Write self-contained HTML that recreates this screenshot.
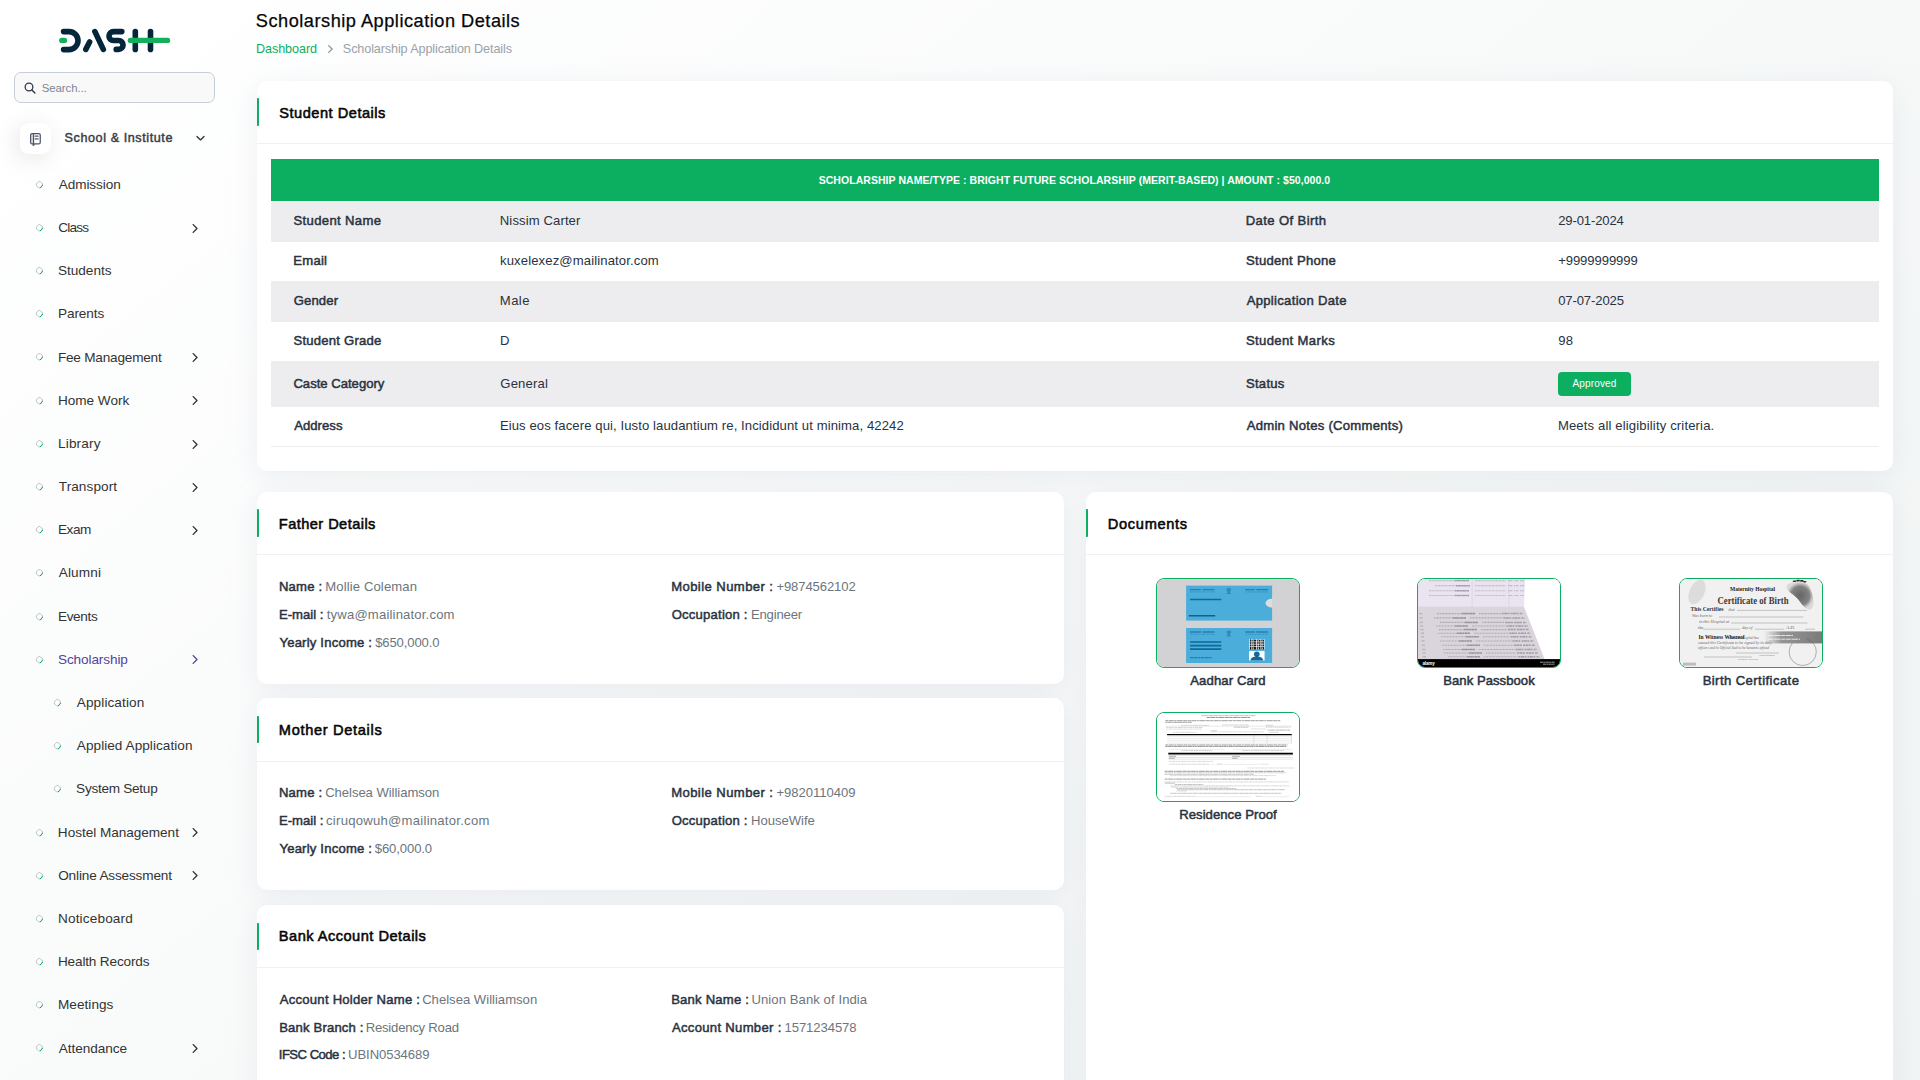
<!DOCTYPE html>
<html lang="en"><head>
<meta charset="utf-8">
<title>Scholarship Application Details</title>
<style>
*{box-sizing:border-box;margin:0;padding:0}
html,body{width:1920px;height:1080px;overflow:hidden}
body{font-family:"Liberation Sans",sans-serif;color:#293240;font-size:13px;
 background:linear-gradient(141.55deg,rgba(240,244,243,0) 3.46%,#f0f4f3 99.86%),#ffffff;position:relative}
.abs{position:absolute;white-space:nowrap}
/* ---------- sidebar ---------- */
#logo{position:absolute;left:56px;top:24px;width:118px;height:32px}
.search{position:absolute;left:14px;top:72px;width:201px;height:31px;border:1px solid #c8ced8;border-radius:7px;background:#f9f9fa}
.search svg{position:absolute;left:9px;top:9px;width:12px;height:12px}
.search span{position:absolute;left:27px;top:0;line-height:29px;font-size:11.4px;color:#7b8594}
.modicon{position:absolute;left:20px;top:123px;width:31px;height:31px;border-radius:9px;background:#fff;box-shadow:-3px 4px 23px rgba(0,0,0,.1)}
.modicon svg{position:absolute;left:9px;top:8.5px;width:13px;height:14px}
.modname{left:64.5px;top:127px;line-height:20px;font-size:12.6px;font-weight:normal;-webkit-text-stroke:.45px #3a3d42;color:#3a3d42}
.menu{position:absolute;left:0;top:162.8px;width:240px;list-style:none}
.menu li{position:relative;height:43.2px;line-height:43.2px;font-size:13.6px;color:#333;white-space:nowrap}
.menu li b{font-weight:normal;position:absolute;left:58.5px;top:0}
.menu li.sub b{left:76px}
.menu li i{position:absolute;left:36.1px;top:17.9px;width:7.4px;height:7.4px;border-radius:50%;border:1px solid #c4cad3;border-bottom-color:#0caf60;transform:rotate(-50deg);background:#fff}
.menu li.sub i{left:54.1px}
.menu li svg{position:absolute;left:190.5px;top:16.6px;width:8px;height:11px}
.menu li.act{color:#51459d}
/* ---------- main ---------- */
.h4{left:256.5px;top:9px;line-height:24px;font-size:18.2px;color:#060606;-webkit-text-stroke:.25px #060606}
.bc{top:39px;line-height:18px;font-size:12.6px}
.card{position:absolute;background:#fff;border-radius:10px;box-shadow:0 5px 27px rgba(182,186,203,.22)}
.card .bar{position:absolute;left:0;width:2px;height:27.5px;background:#0caf60;border-radius:0 1px 1px 0}
.card .hr{position:absolute;left:0;right:0;height:1px;background:#f1f1f1}
.ct{font-size:14.6px;-webkit-text-stroke:.55px #060606;color:#060606;line-height:20px}

.tbl{position:absolute;left:271px;top:159px;width:1608px;height:290px}
.th{height:42px;background:#0caf60;color:#fff;font-weight:bold;font-size:10.5px;text-align:center;line-height:43.8px;white-space:nowrap;padding-right:1.2px}
.tr{position:absolute;left:0;width:100%;height:40px;line-height:40.2px;font-size:13.1px;color:#293240;white-space:nowrap}
.tr.g{background:#ededef}

.tr span{position:absolute;top:0}
.tr .l1{left:22.5px;-webkit-text-stroke:.48px #293240}
.tr .v1{left:229.5px}
.tr .l2{left:975px;-webkit-text-stroke:.48px #293240}
.tr .v2{left:1287px}
.tr.last{line-height:38px}
.tline{position:absolute;left:0;width:100%;top:287.1px;height:1px;background:#ededee}
.badge{position:absolute;left:1287px;top:11px;height:24px;width:73px;border-radius:4px;background:#0caf60;color:#fff;font-size:10px;line-height:24px;text-align:center}
.kv{font-size:13.1px;line-height:20px;color:#6c757d}
.kl{color:#293240;-webkit-text-stroke:.48px #293240}
.doc{position:absolute;width:144px;height:90px;border:1px solid #0caf60;border-radius:8px;overflow:hidden;background:#fff}
.doc svg{position:absolute;left:0;top:0;width:142px;height:88px}
.dl{position:absolute;width:200px;text-align:center;font-weight:normal;-webkit-text-stroke:.5px #293240;font-size:13.1px;line-height:18px;color:#293240;white-space:nowrap}
</style>
</head>
<body>
<!-- SIDEBAR -->
<svg id="logo" viewBox="56 24 118 32" role="img" aria-label="DASH"><title>DASH</title>
<g fill="none" stroke="#04263a" stroke-width="5.6" stroke-linecap="round" stroke-linejoin="round">
<path d="M63.6 31.6H69a9 9 0 0 1 0 18H63.6"></path>
<path d="M85.8 49.4L89.6 42"></path>
<path d="M94.9 31.6L103.3 49.4"></path>
<path d="M121.8 31.6H113.4a4.45 4.45 0 0 0 0 8.9H118.6a4.45 4.45 0 0 1 0 8.9H116.2"></path>
<path d="M135.3 31.6V49.4"></path>
<path d="M150.5 31.6V49.4"></path>
</g>
<g fill="none" stroke="#12b05c" stroke-width="5.4" stroke-linecap="round">
<path d="M61.8 40.4H64.4"></path>
<path d="M130.4 40.4H167.5"></path>
</g>
</svg>
<div class="search"><svg viewBox="0 0 12 12"><circle cx="5" cy="5" r="3.85" fill="none" stroke="#2f3947" stroke-width="1.3"></circle><path d="M7.9 7.9L10.9 10.9" stroke="#2f3947" stroke-width="1.4" stroke-linecap="round"></path></svg><span style="letter-spacing: -0.068px; left: 26.72px; top: 0.58px;">Search...</span></div>
<div class="modicon"><svg viewBox="0 0 13 14"><rect x="2.3" y="2.2" width="1.6" height="9.1" fill="#dde0e5"/><g fill="none" stroke="#4b5567" stroke-width="1.25" stroke-linejoin="round" stroke-linecap="round"><rect x="1.65" y="1.55" width="9.6" height="10.4" rx="1.5"/><path d="M4.5 1.6V12"/><path d="M6.2 4.2H9.1M6.2 6.9H9.1"/></g><path d="M2.7 12.4H6.3L4.5 14.2z" fill="#4b5567"/></svg></div>
<div class="modicon" style="top:1093px"></div>
<div class="abs modname" style="letter-spacing: 0.575px; left: 64.61px; top: 127.59px;">School &amp; Institute</div>
<ul class="menu">
<li><i></i><b style="letter-spacing: -0.086px; left: 58.74px;">Admission</b></li>
<li><i></i><b style="letter-spacing: -0.791px; left: 58.18px;">Class</b><svg viewBox="0 0 8 11"><path d="M2.2 1.6L6 5.5L2.2 9.4" fill="none" stroke="#333" stroke-width="1.35" stroke-linecap="round" stroke-linejoin="round"></path></svg></li>
<li><i></i><b style="letter-spacing: 0.007px; left: 57.89px;">Students</b></li>
<li><i></i><b style="letter-spacing: -0.098px; left: 58px;">Parents</b></li>
<li><i></i><b style="letter-spacing: -0.205px; left: 57.88px;">Fee Management</b><svg viewBox="0 0 8 11"><path d="M2.2 1.6L6 5.5L2.2 9.4" fill="none" stroke="#333" stroke-width="1.35" stroke-linecap="round" stroke-linejoin="round"></path></svg></li>
<li><i></i><b style="letter-spacing: -0.036px; left: 58px;">Home Work</b><svg viewBox="0 0 8 11"><path d="M2.2 1.6L6 5.5L2.2 9.4" fill="none" stroke="#333" stroke-width="1.35" stroke-linecap="round" stroke-linejoin="round"></path></svg></li>
<li><i></i><b style="letter-spacing: 0.158px; left: 58px;">Library</b><svg viewBox="0 0 8 11"><path d="M2.2 1.6L6 5.5L2.2 9.4" fill="none" stroke="#333" stroke-width="1.35" stroke-linecap="round" stroke-linejoin="round"></path></svg></li>
<li><i></i><b style="letter-spacing: 0.079px; left: 58.75px;">Transport</b><svg viewBox="0 0 8 11"><path d="M2.2 1.6L6 5.5L2.2 9.4" fill="none" stroke="#333" stroke-width="1.35" stroke-linecap="round" stroke-linejoin="round"></path></svg></li>
<li><i></i><b style="letter-spacing: -0.469px; left: 58px;">Exam</b><svg viewBox="0 0 8 11"><path d="M2.2 1.6L6 5.5L2.2 9.4" fill="none" stroke="#333" stroke-width="1.35" stroke-linecap="round" stroke-linejoin="round"></path></svg></li>
<li><i></i><b style="letter-spacing: 0.153px; left: 58.73px;">Alumni</b></li>
<li><i></i><b style="letter-spacing: -0.315px; left: 57.88px;">Events</b></li>
<li class="act"><i></i><b style="letter-spacing: -0.113px; left: 57.98px;">Scholarship</b><svg viewBox="0 0 8 11"><path d="M2.2 1.6L6 5.5L2.2 9.4" fill="none" stroke="#51459d" stroke-width="1.35" stroke-linecap="round" stroke-linejoin="round"></path></svg></li>
<li class="sub"><i></i><b style="letter-spacing: 0.089px; left: 76.82px;">Application</b></li>
<li class="sub"><i></i><b style="letter-spacing: 0.044px; left: 76.82px;">Applied Application</b></li>
<li class="sub"><i></i><b style="letter-spacing: -0.275px; left: 76.1px;">System Setup</b></li>
<li><i></i><b style="letter-spacing: -0.037px; left: 57.87px;">Hostel Management</b><svg viewBox="0 0 8 11"><path d="M2.2 1.6L6 5.5L2.2 9.4" fill="none" stroke="#333" stroke-width="1.35" stroke-linecap="round" stroke-linejoin="round"></path></svg></li>
<li><i></i><b style="letter-spacing: -0.16px; left: 58.21px;">Online Assessment</b><svg viewBox="0 0 8 11"><path d="M2.2 1.6L6 5.5L2.2 9.4" fill="none" stroke="#333" stroke-width="1.35" stroke-linecap="round" stroke-linejoin="round"></path></svg></li>
<li><i></i><b style="letter-spacing: 0.156px; left: 57.96px;">Noticeboard</b></li>
<li><i></i><b style="letter-spacing: -0.169px; left: 57.96px;">Health Records</b></li>
<li><i></i><b style="letter-spacing: 0.04px; left: 57.96px;">Meetings</b></li>
<li><i></i><b style="letter-spacing: -0.065px; left: 58.86px;">Attendance</b><svg viewBox="0 0 8 11"><path d="M2.2 1.6L6 5.5L2.2 9.4" fill="none" stroke="#333" stroke-width="1.35" stroke-linecap="round" stroke-linejoin="round"></path></svg></li>
</ul>
<svg class="abs" style="left:195px;top:134px;width:11px;height:8px" viewBox="0 0 11 8"><path d="M2 2.4L5.5 5.9L9 2.4" fill="none" stroke="#333" stroke-width="1.35" stroke-linecap="round" stroke-linejoin="round"></path></svg>
<!-- MAIN -->
<div class="abs h4" style="letter-spacing: 0.504px; left: 255.87px; top: 9.33px;">Scholarship Application Details</div>
<div class="abs bc" style="left: 255.99px; color: rgb(12, 175, 96); letter-spacing: -0.067px; top: 40.3px;">Dashboard</div>
<svg class="abs" style="left:326px;top:43.6px;width:9px;height:10px" viewBox="0 0 9 10"><path d="M2.6 1.6L6.2 5L2.6 8.4" fill="none" stroke="#8a919b" stroke-width="1.2" stroke-linecap="round" stroke-linejoin="round"></path></svg>
<div class="abs bc" style="left: 342.85px; color: rgb(155, 161, 168); letter-spacing: -0.102px; top: 40.3px;">Scholarship Application Details</div>

<!-- Student details card -->
<div class="card" style="left:257px;top:80.8px;width:1636px;height:389.9px">
<div class="bar" style="top:17.5px"></div><div class="hr" style="top:62px"></div>
</div>
<div class="abs ct" style="left: 279.21px; top: 102.79px; letter-spacing: 0.516px;">Student Details</div>
<div class="tbl">
<div class="th" style="letter-spacing: 0.049px;">SCHOLARSHIP NAME/TYPE : BRIGHT FUTURE SCHOLARSHIP (MERIT-BASED) | AMOUNT : $50,000.0</div>
<div class="tr g" style="top:42px;height:40.9px"><span class="l1" style="letter-spacing: 0.337px; left: 22.52px;">Student Name</span><span class="v1" style="letter-spacing: 0.107px; left: 228.81px;">Nissim Carter</span><span class="l2" style="letter-spacing: 0.397px; left: 974.66px;">Date Of Birth</span><span class="v2" style="letter-spacing: -0.159px; left: 1287.24px;">29-01-2024</span></div>
<div class="tr" style="top:82px"><span class="l1" style="letter-spacing: 0.219px; left: 22.3px;">Email</span><span class="v1" style="letter-spacing: 0.121px; left: 229.04px;">kuxelexez@mailinator.com</span><span class="l2" style="letter-spacing: 0.274px; left: 974.98px;">Student Phone</span><span class="v2" style="letter-spacing: -0.082px; left: 1287.17px;">+9999999999</span></div>
<div class="tr g" style="top:122px;height:40.9px"><span class="l1" style="letter-spacing: 0.135px; left: 22.69px;">Gender</span><span class="v1" style="letter-spacing: 0.437px; left: 228.81px;">Male</span><span class="l2" style="letter-spacing: 0.295px; left: 975.7px;">Application Date</span><span class="v2" style="letter-spacing: -0.128px; left: 1287.17px;">07-07-2025</span></div>
<div class="tr" style="top:162px"><span class="l1" style="letter-spacing: 0.221px; left: 22.46px;">Student Grade</span><span class="v1" style="left: 228.88px; letter-spacing: 24.255px;">D</span><span class="l2" style="letter-spacing: 0.358px; left: 974.98px;">Student Marks</span><span class="v2" style="letter-spacing: 0.121px; left: 1287.26px;">98</span></div>
<div class="tr g" style="top:202px;height:45.6px;line-height:46.2px"><span class="l1" style="letter-spacing: -0.004px; left: 22.43px;">Caste Category</span><span class="v1" style="letter-spacing: 0.16px; left: 229.3px;">General</span><span class="l2" style="letter-spacing: 0.264px; left: 974.96px;">Status</span><div class="badge" style="letter-spacing: 0.153px;">Approved</div></div>
<div class="tr last" style="top:247.5px"><span class="l1" style="letter-spacing: 0.048px; left: 23.14px;">Address</span><span class="v1" style="letter-spacing: 0.094px; left: 228.88px;">Eius eos facere qui, Iusto laudantium re, Incididunt ut minima, 42242</span><span class="l2" style="letter-spacing: 0.264px; left: 975.69px;">Admin Notes (Comments)</span><span class="v2" style="letter-spacing: 0.142px; left: 1286.9px;">Meets all eligibility criteria.</span></div>
<div class="tline"></div><div class="tline" style="top:41.8px;height:.9px;background:#f8f4f7"></div>
</div>

<!-- Father -->
<div class="card" style="left:257px;top:491.9px;width:807.2px;height:191.9px">
<div class="bar" style="top:17.5px"></div><div class="hr" style="top:62.1px"></div>
</div>
<div class="abs ct" style="left: 278.84px; top: 513.54px; letter-spacing: 0.439px;">Father Details</div>
<div class="abs kv kl" style="left: 278.88px; top: 577.15px; letter-spacing: 0.234px;">Name :</div><div class="abs kv" style="left: 325.24px; top: 577.15px; letter-spacing: 0.116px;">Mollie Coleman</div>
<div class="abs kv kl" style="left: 278.88px; top: 605.15px; letter-spacing: 0.022px;">E-mail :</div><div class="abs kv" style="left: 326.8px; top: 605.15px; letter-spacing: 0.171px;">tywa@mailinator.com</div>
<div class="abs kv kl" style="left: 279.45px; top: 633.15px; letter-spacing: 0.195px;">Yearly Income :</div><div class="abs kv" style="left: 375.14px; top: 633.15px; letter-spacing: -0.125px;">$650,000.0</div>
<div class="abs kv kl" style="left: 671.16px; top: 577.15px; letter-spacing: 0.414px;">Mobile Number :</div><div class="abs kv" style="left: 776.41px; top: 577.15px; letter-spacing: -0.12px;">+9874562102</div>
<div class="abs kv kl" style="left: 671.64px; top: 605.15px; letter-spacing: 0.213px;">Occupation :</div><div class="abs kv" style="left: 750.95px; top: 605.15px; letter-spacing: -0.175px;">Engineer</div>

<!-- Mother -->
<div class="card" style="left:257px;top:698.1px;width:807.2px;height:191.7px">
<div class="bar" style="top:17.5px"></div><div class="hr" style="top:62.7px"></div>
</div>
<div class="abs ct" style="left: 278.84px; top: 719.54px; letter-spacing: 0.679px;">Mother Details</div>
<div class="abs kv kl" style="left: 278.88px; top: 783.05px; letter-spacing: 0.234px;">Name :</div><div class="abs kv" style="left: 325.16px; top: 783.05px; letter-spacing: -0.049px;">Chelsea Williamson</div>
<div class="abs kv kl" style="left: 278.88px; top: 811.05px; letter-spacing: 0.022px;">E-mail :</div><div class="abs kv" style="left: 326.05px; top: 811.05px; letter-spacing: 0.257px;">ciruqowuh@mailinator.com</div>
<div class="abs kv kl" style="left: 279.45px; top: 839.05px; letter-spacing: 0.195px;">Yearly Income :</div><div class="abs kv" style="left: 374.73px; top: 839.05px; letter-spacing: -0.107px;">$60,000.0</div>
<div class="abs kv kl" style="left: 671.16px; top: 783.05px; letter-spacing: 0.414px;">Mobile Number :</div><div class="abs kv" style="left: 776.41px; top: 783.05px; letter-spacing: -0.026px;">+9820110409</div>
<div class="abs kv kl" style="left: 671.64px; top: 811.05px; letter-spacing: 0.213px;">Occupation :</div><div class="abs kv" style="left: 750.95px; top: 811.05px; letter-spacing: -0.017px;">HouseWife</div>

<!-- Bank -->
<div class="card" style="left:257px;top:905px;width:807.2px;height:220px">
<div class="bar" style="top:17.5px"></div><div class="hr" style="top:62px"></div>
</div>
<div class="abs ct" style="left: 278.84px; top: 925.8px; letter-spacing: 0.481px;">Bank Account Details</div>
<div class="abs kv kl" style="left: 279.76px; top: 990.15px; letter-spacing: 0.242px;">Account Holder Name :</div><div class="abs kv" style="left: 422.15px; top: 990.15px; letter-spacing: 0.004px;">Chelsea Williamson</div>
<div class="abs kv kl" style="left: 279.18px; top: 1018.15px; letter-spacing: 0.172px;">Bank Branch :</div><div class="abs kv" style="left: 365.72px; top: 1018.15px; letter-spacing: -0.213px;">Residency Road</div>
<div class="abs kv kl" style="left: 278.78px; top: 1044.5px; letter-spacing: -0.517px;">IFSC Code :</div><div class="abs kv" style="left: 348.06px; top: 1044.5px; letter-spacing: -0.081px;">UBIN0534689</div>
<div class="abs kv kl" style="left: 671.16px; top: 990.15px; letter-spacing: 0.201px;">Bank Name :</div><div class="abs kv" style="left: 751.38px; top: 990.15px; letter-spacing: 0.082px;">Union Bank of India</div>
<div class="abs kv kl" style="left: 671.92px; top: 1018.15px; letter-spacing: 0.305px;">Account Number :</div><div class="abs kv" style="left: 784.49px; top: 1018.15px; letter-spacing: -0.08px;">1571234578</div>

<!-- Documents -->
<div class="card" style="left:1086px;top:491.9px;width:807px;height:640px">
<div class="bar" style="top:17.5px"></div><div class="hr" style="top:62.1px"></div>
</div>
<div class="abs ct" style="left: 1107.84px; top: 513.54px; letter-spacing: 0.683px;">Documents</div>
<div class="doc" id="d1" style="left:1156px;top:578px"><svg viewBox="0 0 142 88"><rect width="142" height="88" fill="#d2d2d4"></rect><rect x="29.1" y="6.6" width="86" height="35" fill="#4badda"></rect><rect x="29.1" y="49" width="86" height="35" fill="#4badda"></rect><ellipse cx="115.1" cy="24.1" rx="6.6" ry="4.3" fill="#dedee1"></ellipse><rect x="115.1" y="18" width="8" height="13" fill="#d2d2d4"></rect><g stroke="#1d6f9f" fill="none"><path d="M33 10.6H58" stroke-width="1.3" stroke-dasharray="11 1.5 12" opacity=".75"></path><path d="M33 12.9H58" stroke-width=".8" stroke-dasharray="2 .7 5 .7" opacity=".45"></path><path d="M88.3 10.6H111" stroke-width="1.3" stroke-dasharray="9.5 1.5 12" opacity=".75"></path><path d="M88.3 12.9H111" stroke-width=".8" stroke-dasharray="2 .7 5 .7" opacity=".45"></path></g><path d="M69.6 9.3h4.4v2.6h-.9v2.2h.9v1h-4.4v-1h.9v-2.2h-.9z" fill="#2b7fb0" opacity=".8"></path><g stroke="#1d6f9f" fill="none"><path d="M33 53.0H58" stroke-width="1.3" stroke-dasharray="11 1.5 12" opacity=".75"></path><path d="M33 55.3H58" stroke-width=".8" stroke-dasharray="2 .7 5 .7" opacity=".45"></path><path d="M88.3 53.0H111" stroke-width="1.3" stroke-dasharray="9.5 1.5 12" opacity=".75"></path><path d="M88.3 55.3H111" stroke-width=".8" stroke-dasharray="2 .7 5 .7" opacity=".45"></path></g><path d="M69.6 51.7h4.4v2.6h-.9v2.2h.9v1h-4.4v-1h.9v-2.2h-.9z" fill="#2b7fb0" opacity=".8"></path><g stroke="#0e6a9c" stroke-width="1.6" fill="none"><path d="M33 20.5H64.3"></path><path d="M31.8 36.7H58.2" stroke="#14608c"></path><path d="M33 63H64.3M33 66.6H64.3M33 70.1H64.3"></path></g><path d="M33 78.6H55.2" stroke="#1d6f9f" stroke-width="1.1" stroke-dasharray="3 .5 4 .5 2.5 .5" opacity=".8"></path><rect x="92" y="60.2" width="15.6" height="10.3" fill="#f2f2f2"></rect><path d="M92.8 61.3H107M92.8 63.1H107M92.8 64.9H107M92.8 66.7H107M92.8 68.5H107M92.8 69.9H107" stroke="#1b1b1b" stroke-width="1.25" stroke-dasharray="1.6 .9 .8 .7 2.2 .8 1 1.1" fill="none"></path><path d="M93.6 60.4V70.4M96.9 60.4V70.4M101.2 60.4V70.4M105.3 60.4V70.4" stroke="#2a2a2a" stroke-width="1" stroke-dasharray="1.2 1 2 1.3 .8 .9" fill="none" opacity=".8"></path><rect x="92" y="71.9" width="15.6" height="9.6" fill="#fbfbfb"></rect><circle cx="99.8" cy="75.2" r="2.8" fill="#0f6a9b"></circle><path d="M93.4 81.5c.4-2.7 2.2-3.3 4.4-3.7h4c2.2 .4 4 1 4.4 3.7z" fill="#0f6a9b"></path></svg></div>
<div class="doc" id="d2" style="left:1417px;top:578px"><svg viewBox="0 0 142 88"><rect width="142" height="88" fill="#dad4dc"></rect><rect width="142" height="27.7" fill="#e9e4f0"></rect><path d="M54.2 0V27.7M91 0V27.7" stroke="#cfc8d8" stroke-width=".5"></path><g stroke="#5b5666" stroke-width="1.1" fill="none" opacity=".6"><path d="M11 1.6H51" stroke-dasharray=".9 .5" opacity=".55"></path><path d="M37 1.6H51" stroke-dasharray="1.6 .5 2.6 .4" stroke-width="1.5" opacity=".75"></path><path d="M57 1.6H88" stroke-dasharray=".9 .5" opacity=".5"></path><path d="M90 1.6H106" stroke-dasharray="1.4 .6 2.4 1.6" opacity=".5"></path><path d="M17 6.65H52" stroke-dasharray=".9 .5" opacity=".55"></path><path d="M38 6.65H52" stroke-dasharray="1.6 .5 2.6 .4" stroke-width="1.5" opacity=".75"></path><path d="M57 6.65H88" stroke-dasharray=".9 .5" opacity=".5"></path><path d="M90 6.65H106" stroke-dasharray="1.4 .6 2.4 1.6" opacity=".5"></path><path d="M11 11.7H51" stroke-dasharray=".9 .5" opacity=".55"></path><path d="M37 11.7H51" stroke-dasharray="1.6 .5 2.6 .4" stroke-width="1.5" opacity=".75"></path><path d="M57 11.7H88" stroke-dasharray=".9 .5" opacity=".5"></path><path d="M90 11.7H106" stroke-dasharray="1.4 .6 2.4 1.6" opacity=".5"></path><path d="M11 16.5H51" stroke-dasharray=".9 .5" opacity=".55"></path><path d="M37 16.5H51" stroke-dasharray="1.6 .5 2.6 .4" stroke-width="1.5" opacity=".75"></path><path d="M57 16.5H88" stroke-dasharray=".9 .5" opacity=".5"></path><path d="M90 16.5H106" stroke-dasharray="1.4 .6 2.4 1.6" opacity=".5"></path><path d="M19 34.6H57" stroke-dasharray="1 .5" opacity=".6"></path><path d="M44 34.6H57" stroke-dasharray="1.8 .5 2.8 .5" stroke-width="1.5" opacity=".8"></path><path d="M61 34.6H82.7" stroke-dasharray="1 .5" opacity=".6"></path><path d="M83.7 34.6H104.7" stroke-dasharray="2 .5 3 .5 1.8 1.2" stroke-width="1.5" opacity=".75"></path><path d="M1.0 34.6h3.2" stroke-width="1.3" opacity=".45"></path><path d="M16 38.9H48" stroke-dasharray="1 .5" opacity=".6"></path><path d="M35 38.9H48" stroke-dasharray="1.8 .5 2.8 .5" stroke-width="1.5" opacity=".8"></path><path d="M52 38.9H84.4" stroke-dasharray="1 .5" opacity=".6"></path><path d="M85.4 38.9H106.4" stroke-dasharray="2 .5 3 .5 1.8 1.2" stroke-width="1.5" opacity=".75"></path><path d="M1.4 38.9h3.2" stroke-width="1.3" opacity=".45"></path><path d="M22 43.4H60" stroke-dasharray="1 .5" opacity=".6"></path><path d="M47 43.4H60" stroke-dasharray="1.8 .5 2.8 .5" stroke-width="1.5" opacity=".8"></path><path d="M64 43.4H86.1" stroke-dasharray="1 .5" opacity=".6"></path><path d="M87.1 43.4H108.1" stroke-dasharray="2 .5 3 .5 1.8 1.2" stroke-width="1.5" opacity=".75"></path><path d="M1.7 43.4h3.2" stroke-width="1.3" opacity=".45"></path><path d="M18 47H50" stroke-dasharray="1 .5" opacity=".6"></path><path d="M37 47H50" stroke-dasharray="1.8 .5 2.8 .5" stroke-width="1.5" opacity=".8"></path><path d="M54 47H87.5" stroke-dasharray="1 .5" opacity=".6"></path><path d="M88.5 47H109.5" stroke-dasharray="2 .5 3 .5 1.8 1.2" stroke-width="1.5" opacity=".75"></path><path d="M2.0 47h3.2" stroke-width="1.3" opacity=".45"></path><path d="M21 50.6H59" stroke-dasharray="1 .5" opacity=".6"></path><path d="M46 50.6H59" stroke-dasharray="1.8 .5 2.8 .5" stroke-width="1.5" opacity=".8"></path><path d="M63 50.6H88.9" stroke-dasharray="1 .5" opacity=".6"></path><path d="M89.9 50.6H110.9" stroke-dasharray="2 .5 3 .5 1.8 1.2" stroke-width="1.5" opacity=".75"></path><path d="M2.4 50.6h3.2" stroke-width="1.3" opacity=".45"></path><path d="M20 54.2H52" stroke-dasharray="1 .5" opacity=".6"></path><path d="M39 54.2H52" stroke-dasharray="1.8 .5 2.8 .5" stroke-width="1.5" opacity=".8"></path><path d="M56 54.2H90.3" stroke-dasharray="1 .5" opacity=".6"></path><path d="M91.3 54.2H112.3" stroke-dasharray="2 .5 3 .5 1.8 1.2" stroke-width="1.5" opacity=".75"></path><path d="M2.8 54.2h3.2" stroke-width="1.3" opacity=".45"></path><path d="M23 57.8H61" stroke-dasharray="1 .5" opacity=".6"></path><path d="M48 57.8H61" stroke-dasharray="1.8 .5 2.8 .5" stroke-width="1.5" opacity=".8"></path><path d="M65 57.8H91.7" stroke-dasharray="1 .5" opacity=".6"></path><path d="M92.7 57.8H113.7" stroke-dasharray="2 .5 3 .5 1.8 1.2" stroke-width="1.5" opacity=".75"></path><path d="M3.1 57.8h3.2" stroke-width="1.3" opacity=".45"></path><path d="M22 62H54" stroke-dasharray="1 .5" opacity=".6"></path><path d="M41 62H54" stroke-dasharray="1.8 .5 2.8 .5" stroke-width="1.5" opacity=".8"></path><path d="M58 62H93.4" stroke-dasharray="1 .5" opacity=".6"></path><path d="M94.4 62H115.4" stroke-dasharray="2 .5 3 .5 1.8 1.2" stroke-width="1.5" opacity=".75"></path><path d="M3.4 62h3.2" stroke-width="1.3" opacity=".45"></path><path d="M24 66.2H62" stroke-dasharray="1 .5" opacity=".6"></path><path d="M49 66.2H62" stroke-dasharray="1.8 .5 2.8 .5" stroke-width="1.5" opacity=".8"></path><path d="M66 66.2H95.0" stroke-dasharray="1 .5" opacity=".6"></path><path d="M96.0 66.2H117.0" stroke-dasharray="2 .5 3 .5 1.8 1.2" stroke-width="1.5" opacity=".75"></path><path d="M3.8 66.2h3.2" stroke-width="1.3" opacity=".45"></path><path d="M25 70.5H57" stroke-dasharray="1 .5" opacity=".6"></path><path d="M44 70.5H57" stroke-dasharray="1.8 .5 2.8 .5" stroke-width="1.5" opacity=".8"></path><path d="M61 70.5H96.7" stroke-dasharray="1 .5" opacity=".6"></path><path d="M97.7 70.5H118.7" stroke-dasharray="2 .5 3 .5 1.8 1.2" stroke-width="1.5" opacity=".75"></path><path d="M4.2 70.5h3.2" stroke-width="1.3" opacity=".45"></path><path d="M26 74H64" stroke-dasharray="1 .5" opacity=".6"></path><path d="M51 74H64" stroke-dasharray="1.8 .5 2.8 .5" stroke-width="1.5" opacity=".8"></path><path d="M68 74H98.1" stroke-dasharray="1 .5" opacity=".6"></path><path d="M99.1 74H120.1" stroke-dasharray="2 .5 3 .5 1.8 1.2" stroke-width="1.5" opacity=".75"></path><path d="M4.5 74h3.2" stroke-width="1.3" opacity=".45"></path><path d="M30 77.7H62" stroke-dasharray="1 .5" opacity=".6"></path><path d="M49 77.7H62" stroke-dasharray="1.8 .5 2.8 .5" stroke-width="1.5" opacity=".8"></path><path d="M66 77.7H99.5" stroke-dasharray="1 .5" opacity=".6"></path><path d="M100.5 77.7H121.5" stroke-dasharray="2 .5 3 .5 1.8 1.2" stroke-width="1.5" opacity=".75"></path><path d="M4.8 77.7h3.2" stroke-width="1.3" opacity=".45"></path></g><path d="M107.2 0H142V80.1H126.5L106 27.7z" fill="#fff"></path><rect y="80.1" width="142" height="8" fill="#000"></rect><text x="4.5" y="86" font-family="Liberation Sans,sans-serif" font-size="4.6" font-weight="bold" fill="#fff" letter-spacing="-.2">alamy</text><path d="M122 83.2H137M125 85.2H137" stroke="#ddd" stroke-width=".7" stroke-dasharray="3 .4 2 .4" fill="none"></path></svg></div>
<div class="doc" id="d3" style="left:1679px;top:578px"><svg viewBox="0 0 142 88"><rect width="142" height="88" fill="#f1f1f1"></rect><defs><radialGradient id="fp"><stop offset="0" stop-color="#555"></stop><stop offset=".7" stop-color="#777"></stop><stop offset="1" stop-color="#999" stop-opacity=".3"></stop></radialGradient><linearGradient id="wm" x1="0" x2="1"><stop offset="0" stop-color="#8a8a8a" stop-opacity="0"></stop><stop offset=".3" stop-color="#858585" stop-opacity=".85"></stop><stop offset="1" stop-color="#7a7a7a"></stop></linearGradient></defs><ellipse cx="17" cy="13" rx="7.5" ry="13" transform="rotate(24 17 13)" fill="#cfcfcf" opacity=".6"></ellipse><path d="M106.8 6.5C109 2.5 125 1.5 128.6 6.5C133 13 135.5 25 131.8 29.6C128.5 32.5 123 27.5 119 21.5C114.5 15 104.8 12 106.8 6.5z" fill="url(#fp)" opacity=".9"></path><path d="M113.5 2.3h2M117 1.6h2.2M120.8 1.9h2M124 2.8h1.6" stroke="#333" stroke-width="1.6" stroke-linecap="round"></path><text x="72.5" y="12.3" text-anchor="middle" font-family="Liberation Serif,serif" font-weight="bold" font-size="5.2" fill="#222" textLength="45" lengthAdjust="spacingAndGlyphs">Maternity Hospital</text><text x="73" y="24.6" text-anchor="middle" font-family="Liberation Serif,serif" font-weight="bold" font-size="10" fill="#3a3a3a" textLength="71" lengthAdjust="spacingAndGlyphs">Certificate of Birth</text><text x="10.5" y="31.6" font-family="Liberation Serif,serif" font-weight="bold" font-size="5.4" fill="#333" textLength="33" lengthAdjust="spacingAndGlyphs">This Certifies</text><text x="48.5" y="31.6" font-family="Liberation Serif,serif" font-style="italic" font-size="4" fill="#666">that</text><g stroke="#6a6a6a" stroke-width=".35" fill="none"><path d="M57 31.4H127"></path><path d="M39 38H123.5"></path><path d="M51 44H127.5"></path><path d="M23 50.2H60M75 50.2H104M125 50.2H135"></path><path d="M56 74H99"></path><path d="M24 78H72"></path></g><g font-family="Liberation Serif,serif" font-style="italic" fill="#666" font-size="4.2"><text x="12" y="37.8">Was born to</text><text x="19" y="43.8">in this Hospital at</text><text x="18" y="50">the</text><text x="62" y="50">day of</text><text x="106" y="50" font-size="5">A.D.</text><text x="49" y="59.6" font-size="3.6" textLength="30" lengthAdjust="spacingAndGlyphs">the said Hospital has</text><text x="18" y="64.6" font-size="3.8" textLength="74" lengthAdjust="spacingAndGlyphs">caused this Certificate to be signed by its duly</text><text x="18" y="70.2" font-size="3.8" textLength="71" lengthAdjust="spacingAndGlyphs">officers and its Official Seal to be hereunto affixed</text><text x="79" y="77" font-size="2.6" fill="#888">Superintendent</text><text x="57" y="81" font-size="2.6" fill="#888">Attending Physician</text></g><text x="18.5" y="59.8" font-family="Liberation Serif,serif" font-weight="bold" font-size="5.6" fill="#222" textLength="46" lengthAdjust="spacingAndGlyphs">In Witness Whereof</text><rect x="84" y="52.4" width="58" height="12" fill="url(#wm)"></rect><path d="M88 56.5H113M88 60.2H120" stroke="#f4f4f4" stroke-width="1" stroke-dasharray="5 .6 7 .6 4 .6" opacity=".85"></path><circle cx="122.7" cy="72.9" r="13.6" fill="none" stroke="#555" stroke-width=".5" stroke-dasharray="52 16 18 0" opacity=".85"></circle><rect x="3" y="83.6" width="13" height="3" fill="#bdbdbd"></rect></svg></div>
<div class="doc" id="d4" style="left:1156px;top:712px"><svg viewBox="0 0 142 88"><rect width="142" height="88" fill="#fff"></rect><g fill="none"><path d="M44.4 2.7H98.6" stroke="#222" stroke-width="0.6" opacity="0.5" stroke-dasharray="2 .4 4 .4 1.5 .4 3 .4 5 .4 2.5 .4"></path><path d="M49.8 4.5H93.2" stroke="#222" stroke-width="0.8" opacity="0.60" stroke-dasharray="3 .5 5 .5 2 .5 6 .5 4 .5"></path><path d="M8.3 7.7H123.3" stroke="#222" stroke-width="0.8" opacity="0.56" stroke-dasharray="3 .5 5 .5 2 .5 6 .5 4 .5"></path><path d="M8.3 9.3H34.8" stroke="#222" stroke-width="0.8" opacity="0.56" stroke-dasharray="2 .4 4 .4 1.5 .4 3 .4 5 .4 2.5 .4"></path><path d="M23.9 12.3H52.2" stroke="#222" stroke-width="0.5" opacity="0.35" stroke-dasharray="2 .4 4 .4 1.5 .4 3 .4 5 .4 2.5 .4"></path><path d="M64.9 11.9H92.0" stroke="#222" stroke-width="0.5" opacity="0.35" stroke-dasharray="2 .4 4 .4 1.5 .4 3 .4 5 .4 2.5 .4"></path><path d="M108.8 12.3H116.0" stroke="#222" stroke-width="0.5" opacity="0.35"></path><path d="M8.9 13.2H134.7" stroke="#222" stroke-width="0.35" opacity="0.3"></path><path d="M8.9 14.5H45.6" stroke="#222" stroke-width="0.5" opacity="0.35" stroke-dasharray="2 .4 4 .4 1.5 .4 3 .4 5 .4 2.5 .4"></path><path d="M76.9 14.2H91.4" stroke="#222" stroke-width="0.6" opacity="0.45" stroke-dasharray="2 .4 4 .4 1.5 .4 3 .4 5 .4 2.5 .4"></path><path d="M108.8 14.2H133.5" stroke="#222" stroke-width="0.5" opacity="0.35" stroke-dasharray="2 .4 4 .4 1.5 .4 3 .4 5 .4 2.5 .4"></path><path d="M8.9 16.1H45.0" stroke="#222" stroke-width="0.5" opacity="0.3" stroke-dasharray="2 .4 4 .4 1.5 .4 3 .4 5 .4 2.5 .4"></path><path d="M93.8 15.9H108.8" stroke="#222" stroke-width="0.5" opacity="0.3" stroke-dasharray="2 .4 4 .4 1.5 .4 3 .4 5 .4 2.5 .4"></path><path d="M54.0 17.7H60.1" stroke="#222" stroke-width="0.5" opacity="0.4"></path><path d="M110.6 17.1H133.5" stroke="#222" stroke-width="0.7" opacity="0.45" stroke-dasharray="2 .4 4 .4 1.5 .4 3 .4 5 .4 2.5 .4"></path><path d="M16.1 19.3H39.6" stroke="#222" stroke-width="0.5" opacity="0.35" stroke-dasharray="2 .4 4 .4 1.5 .4 3 .4 5 .4 2.5 .4"></path><path d="M52.8 18.9H107.0" stroke="#222" stroke-width="0.5" opacity="0.3" stroke-dasharray="2 .4 4 .4 1.5 .4 3 .4 5 .4 2.5 .4"></path><path d="M111.8 19.3H121.5" stroke="#222" stroke-width="0.5" opacity="0.35"></path><path d="M10.1 21.7H134.7" stroke="#000" stroke-width="1.3" opacity="1"></path><path d="M10.1 23.7H134.7" stroke="#222" stroke-width="0.3" opacity="0.3"></path><path d="M10.1 25.8H134.7" stroke="#222" stroke-width="0.3" opacity="0.3"></path><path d="M10.1 27.9H134.7" stroke="#222" stroke-width="0.3" opacity="0.3"></path><path d="M10.1 30.1H134.7" stroke="#222" stroke-width="0.3" opacity="0.3"></path><path d="M96.8 21.9V30.1M110.0 21.9V30.1M134.5 21.9V30.1" stroke="#222" stroke-width=".3" opacity=".35"></path><path d="M8.3 32.0H130.5" stroke="#222" stroke-width="0.8" opacity="0.60" stroke-dasharray="3 .5 5 .5 2 .5 6 .5 4 .5"></path><path d="M8.3 33.5H129.3" stroke="#222" stroke-width="0.8" opacity="0.56" stroke-dasharray="2 .4 4 .4 1.5 .4 3 .4 5 .4 2.5 .4"></path><path d="M11.9 36.4H67.9" stroke="#222" stroke-width="0.3" opacity="0.3"></path><path d="M76.3 36.4H135.3" stroke="#222" stroke-width="0.3" opacity="0.3"></path><path d="M24.5 37.6H55.2" stroke="#222" stroke-width="0.5" opacity="0.4" stroke-dasharray="2 .4 4 .4 1.5 .4 3 .4 5 .4 2.5 .4"></path><path d="M84.7 37.6H126.9" stroke="#222" stroke-width="0.5" opacity="0.4" stroke-dasharray="2 .4 4 .4 1.5 .4 3 .4 5 .4 2.5 .4"></path><path d="M11.3 40.6H135.9" stroke="#000" stroke-width="1.6" opacity="1"></path><path d="M11.3 42.6H135.9" stroke="#222" stroke-width="0.3" opacity="0.35"></path><path d="M11.3 44.5H135.9" stroke="#222" stroke-width="0.3" opacity="0.35"></path><path d="M11.3 46.2H135.9" stroke="#222" stroke-width="0.3" opacity="0.35"></path><path d="M11.9 43.3H19.1" stroke="#222" stroke-width="0.7" opacity="0.5"></path><path d="M11.9 45.3H17.9" stroke="#222" stroke-width="0.7" opacity="0.5"></path><path d="M75.1 43.3H82.9" stroke="#222" stroke-width="0.7" opacity="0.5"></path><path d="M75.1 45.3H80.5" stroke="#222" stroke-width="0.7" opacity="0.5"></path><path d="M11.9 48.4H56.4" stroke="#222" stroke-width="0.5" opacity="0.35" stroke-dasharray="2 .4 4 .4 1.5 .4 3 .4 5 .4 2.5 .4"></path><path d="M11.9 51.2H52.8" stroke="#222" stroke-width="0.5" opacity="0.35" stroke-dasharray="2 .4 4 .4 1.5 .4 3 .4 5 .4 2.5 .4"></path><path d="M54.0 51.4H58.2" stroke="#222" stroke-width="0.3" opacity="0.3"></path><path d="M59.5 51.2H66.1" stroke="#222" stroke-width="0.5" opacity="0.35"></path><path d="M67.3 51.4H102.8" stroke="#222" stroke-width="0.3" opacity="0.3"></path><path d="M103.4 51.2H111.8" stroke="#222" stroke-width="0.4" opacity="0.3"></path><path d="M90.2 55.0H137.1" stroke="#222" stroke-width="0.5" opacity="0.3" stroke-dasharray="2 .4 4 .4 1.5 .4 3 .4 5 .4 2.5 .4"></path><path d="M7.7 58.3H126.9" stroke="#222" stroke-width="0.8" opacity="0.60" stroke-dasharray="3 .5 5 .5 2 .5 6 .5 4 .5"></path><path d="M7.7 59.8H128.7" stroke="#222" stroke-width="0.5" opacity="0.4" stroke-dasharray="2 .4 4 .4 1.5 .4 3 .4 5 .4 2.5 .4"></path><path d="M7.7 61.3H96.8" stroke="#222" stroke-width="0.6" opacity="0.45" stroke-dasharray="3 .5 5 .5 2 .5 6 .5 4 .5"></path><path d="M13.1 62.6H119.0" stroke="#222" stroke-width="0.5" opacity="0.35" stroke-dasharray="2 .4 4 .4 1.5 .4 3 .4 5 .4 2.5 .4"></path><path d="M7.7 66.1H109.4" stroke="#222" stroke-width="0.8" opacity="0.56" stroke-dasharray="3 .5 5 .5 2 .5 6 .5 4 .5"></path><path d="M7.7 68.9H131.7" stroke="#222" stroke-width="0.5" opacity="0.35" stroke-dasharray="2 .4 4 .4 1.5 .4 3 .4 5 .4 2.5 .4"></path><path d="M7.7 70.2H17.9" stroke="#222" stroke-width="0.6" opacity="0.45"></path><path d="M17.9 71.5H46.2" stroke="#222" stroke-width="0.6" opacity="0.45" stroke-dasharray="2 .4 4 .4 1.5 .4 3 .4 5 .4 2.5 .4"></path><path d="M13.7 72.8H132.3" stroke="#222" stroke-width="0.5" opacity="0.35" stroke-dasharray="3 .5 5 .5 2 .5 6 .5 4 .5"></path><path d="M13.7 74.2H72.1" stroke="#222" stroke-width="0.5" opacity="0.35" stroke-dasharray="2 .4 4 .4 1.5 .4 3 .4 5 .4 2.5 .4"></path><path d="M19.1 75.5H79.3" stroke="#222" stroke-width="0.6" opacity="0.4" stroke-dasharray="2 .4 4 .4 1.5 .4 3 .4 5 .4 2.5 .4"></path><path d="M20.3 76.7H128.1" stroke="#222" stroke-width="0.6" opacity="0.45" stroke-dasharray="3 .5 5 .5 2 .5 6 .5 4 .5"></path><path d="M19.1 78.0H30.0" stroke="#222" stroke-width="0.5" opacity="0.3"></path><path d="M13.1 80.3H124.5" stroke="#222" stroke-width="0.6" opacity="0.45" stroke-dasharray="2 .4 4 .4 1.5 .4 3 .4 5 .4 2.5 .4"></path><path d="M7.7 83.3H38.4" stroke="#222" stroke-width="0.5" opacity="0.35" stroke-dasharray="2 .4 4 .4 1.5 .4 3 .4 5 .4 2.5 .4"></path><path d="M38.4 83.7H93.8" stroke="#222" stroke-width="0.3" opacity="0.3"></path><path d="M98.6 83.3H104.6" stroke="#222" stroke-width="0.5" opacity="0.35"></path><path d="M105.2 83.7H132.3" stroke="#222" stroke-width="0.3" opacity="0.3"></path></g></svg></div>
<div class="dl" style="left: 1128px; top: 672.15px; letter-spacing: 0.106px;">Aadhar Card</div>
<div class="dl" style="left: 1389px; top: 672.15px; letter-spacing: 0.038px;">Bank Passbook</div>
<div class="dl" style="left: 1651px; top: 672.15px; letter-spacing: 0.426px;">Birth Certificate</div>
<div class="dl" style="left: 1128px; top: 806.15px; letter-spacing: 0.05px;">Residence Proof</div>


</body></html>
